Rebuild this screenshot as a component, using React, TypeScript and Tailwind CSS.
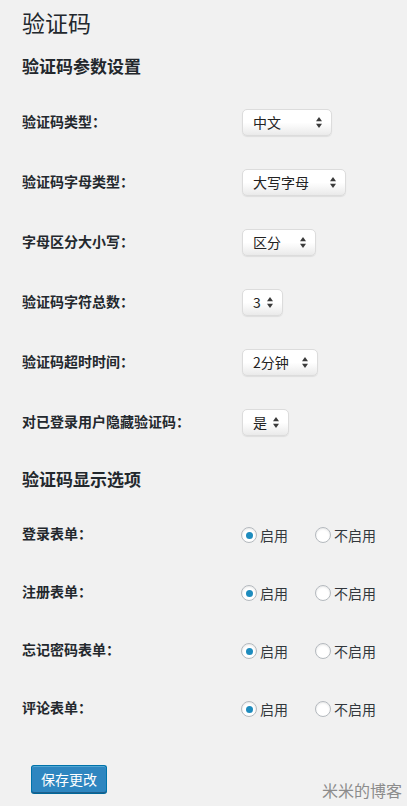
import { useState } from "react";

// Select rows: label, current value, box width
const selectRows = [
  { label: "验证码类型：", value: "中文", width: "w-[90px]" },
  { label: "验证码字母类型：", value: "大写字母", width: "w-[104px]" },
  { label: "字母区分大小写：", value: "区分", width: "w-[74px]" },
  { label: "验证码字符总数：", value: "3", width: "w-[41px]" },
  { label: "验证码超时时间：", value: "2分钟", width: "w-[76px]" },
  { label: "对已登录用户隐藏验证码：", value: "是", width: "w-[47px]" },
];

const radioRows = ["登录表单：", "注册表单：", "忘记密码表单：", "评论表单："];

const Arrows = () => (
  <svg width="6" height="11" viewBox="0 0 6 11" className="shrink-0">
    <path d="M3 0 L6 4.2 L0 4.2 Z" fill="#3a3a3a" />
    <path d="M3 11 L6 6.8 L0 6.8 Z" fill="#3a3a3a" />
  </svg>
);

const FakeSelect = ({ value, width }: { value: string; width: string }) => (
  <div
    className={`${width} h-[27px] flex items-center justify-between pl-[10px] pr-[9px] rounded-[5px] border border-[#dcdcdc] bg-gradient-to-b from-white via-white to-[#eaeaea] shadow-[0_1px_1px_rgba(0,0,0,0.08)] text-[14px] text-[#222]`}
  >
    <span>{value}</span>
    <Arrows />
  </div>
);

const Radio = ({ checked, onClick, text }: { checked: boolean; onClick: () => void; text: string }) => (
  <button type="button" onClick={onClick} className="flex items-center gap-[3px] text-[14px] text-[#32373c]">
    <span className="w-[16px] h-[16px] rounded-full border border-[#b4b9be] bg-white shadow-[inset_0_1px_2px_rgba(0,0,0,0.1)] flex items-center justify-center">
      {checked && <span className="w-[7px] h-[7px] rounded-full bg-[#1e8cbe]" />}
    </span>
    {text}
  </button>
);

export default function App() {
  const [enabled, setEnabled] = useState<boolean[]>([true, true, true, true]);

  const setRow = (i: number, v: boolean) => {
    const next = [...enabled];
    next[i] = v;
    setEnabled(next);
  };

  return (
    <div
      className="relative min-h-screen bg-[#f1f1f1] pl-[22px] text-[#23282d]"
      style={{ fontFamily: '"Noto Sans CJK SC", "Noto Sans", sans-serif' }}
    >
      <h1 className="h-[44px] flex items-center text-[23px] font-normal">验证码</h1>
      <h2 className="h-[44px] flex items-center text-[17px] font-semibold">验证码参数设置</h2>

      <div className="pt-[4px]">
        {selectRows.map((row) => (
          <div key={row.label} className="h-[60px] flex items-center">
            <div className="w-[220px] text-[14px] font-semibold -mt-[1px]">{row.label}</div>
            <FakeSelect value={row.value} width={row.width} />
          </div>
        ))}
      </div>

      <h2 className="h-[54px] flex items-center text-[17px] font-semibold">验证码显示选项</h2>

      <div>
        {radioRows.map((label, i) => (
          <div key={label} className="h-[58px] flex items-center">
            <div className="w-[219px] text-[14px] font-semibold -mt-[4px]">{label}</div>
            <div className="flex items-center gap-[27px]">
              <Radio checked={enabled[i]} onClick={() => setRow(i, true)} text="启用" />
              <Radio checked={!enabled[i]} onClick={() => setRow(i, false)} text="不启用" />
            </div>
          </div>
        ))}
      </div>

      <div className="pt-[27px] pl-[9px]">
        <button
          type="button"
          className="h-[28px] px-[9px] rounded-[3px] bg-[#2e86c0] border border-[#0073aa] border-b-[#1f5f8c] shadow-[inset_0_1px_0_rgba(120,200,230,0.5),0_1px_0_#006799] text-white text-[14px]"
        >
          保存更改
        </button>
      </div>

      <div className="absolute right-[5px] bottom-[4px] text-[16px] text-[#8c8c8c]">米米的博客</div>
    </div>
  );
}
